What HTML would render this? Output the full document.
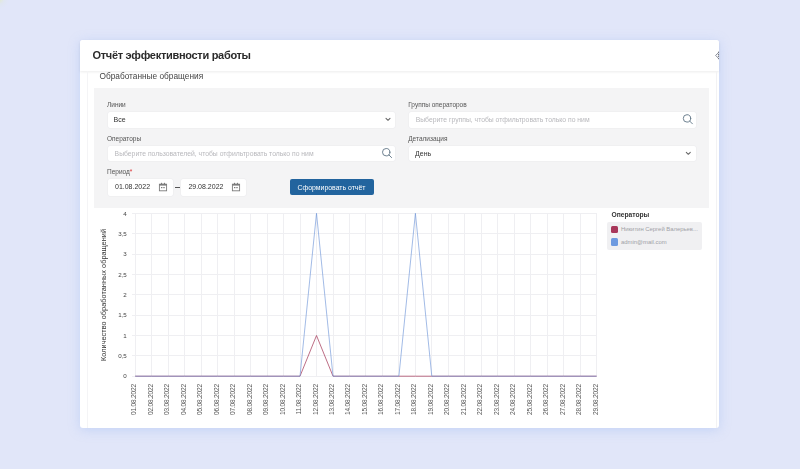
<!DOCTYPE html>
<html><head><meta charset="utf-8">
<style>
*{box-sizing:border-box;margin:0;padding:0}
html,body{width:800px;height:469px;overflow:hidden}
body{background:radial-gradient(circle at 0 0,#e2ead8 0,#e0e6f2 4px,rgba(224,230,248,0) 9px),#e1e6f9;font-family:"Liberation Sans",sans-serif;position:relative;color:#333}
.abs{position:absolute}
.card{left:80px;top:40px;width:639px;height:388px;background:#fff;border-radius:3px;overflow:hidden;box-shadow:0 2px 12px rgba(140,175,240,0.35)}
.header{left:80px;top:40px;width:639px;height:31px;background:#fff;border-radius:3px 3px 0 0;box-shadow:0 1px 3px rgba(0,0,0,0.08)}
.title{left:92.5px;top:49px;font-size:11px;letter-spacing:-0.3px;font-weight:700;color:#2a2a2a;white-space:nowrap}
.sub{left:99.5px;top:71px;font-size:8.3px;color:#444;white-space:nowrap}
.panel{left:94px;top:88px;width:615px;height:120px;background:#f4f4f5}
.lbl{font-size:6.5px;color:#555;white-space:nowrap}
.inp{background:#fff;border-radius:2px;height:16.5px;box-shadow:0 0 0 0.5px #ebebee}
.ph{font-size:6.8px;color:#b8b8bc;white-space:nowrap}
.val{font-size:7px;color:#333;white-space:nowrap}
.btn{left:289.5px;top:178.5px;width:84px;height:16.5px;background:#22649e;border-radius:2px;color:#fff;font-size:6.9px;text-align:center;line-height:17.3px;white-space:nowrap}
.chart{position:absolute;left:0;top:0}
.leg-title{left:611.5px;top:210.5px;font-size:6.7px;font-weight:700;color:#333;white-space:nowrap}
.legbox{left:607px;top:222px;width:95px;height:27.5px;background:#f0f0f2;border-radius:2px}
.sq{width:7.5px;height:7.5px;border-radius:1.5px}
.legt{font-size:5.9px;color:#a0a0a6;white-space:nowrap}
.wrap{position:absolute;left:0;top:0;width:800px;height:469px;filter:blur(0.3px)}
</style></head><body><div class="wrap">
<div class="abs card"></div>
<div class="abs header"></div>

<div class="abs" style="left:87px;top:71px;width:1px;height:357px;background:#f4f4f6"></div>
<div class="abs" style="left:716px;top:71px;width:1px;height:357px;background:#f2f2f4"></div>
<div class="abs title">Отчёт эффективности работы</div>
<div class="abs sub">Обработанные обращения</div>
<div class="abs panel"></div>

<div class="abs lbl" style="left:107px;top:101px">Линии</div>
<div class="abs inp" style="left:108px;top:111.5px;width:287px"></div>
<div class="abs val" style="left:113.6px;top:115.5px">Все</div>

<div class="abs lbl" style="left:107px;top:135px">Операторы</div>
<div class="abs inp" style="left:108px;top:145.8px;width:287px;height:15.5px"></div>
<div class="abs ph" style="left:114.6px;top:149.5px">Выберите пользователей, чтобы отфильтровать только по ним</div>

<div class="abs lbl" style="left:408.2px;top:101px">Группы операторов</div>
<div class="abs inp" style="left:409px;top:111.5px;width:287px"></div>
<div class="abs ph" style="left:415.7px;top:115.5px">Выберите группы, чтобы отфильтровать только по ним</div>

<div class="abs lbl" style="left:408.2px;top:135px">Детализация</div>
<div class="abs inp" style="left:409px;top:145.8px;width:287px;height:15.5px"></div>
<div class="abs val" style="left:415px;top:149.5px">День</div>

<div class="abs lbl" style="left:107px;top:168px">Период<span style="color:#d33">*</span></div>
<div class="abs inp" style="left:108px;top:179px;width:65px"></div>
<div class="abs val" style="left:115px;top:183px">01.08.2022</div>
<div class="abs" style="left:174.5px;top:186.8px;width:5.5px;height:1px;background:#555"></div>
<div class="abs inp" style="left:181px;top:179px;width:65px"></div>
<div class="abs val" style="left:188.4px;top:183px">29.08.2022</div>

<div class="abs btn">Сформировать отчёт</div>

<svg class="chart" width="800" height="469" viewBox="0 0 800 469">
<g stroke="#efeff2" stroke-width="1" shape-rendering="crispEdges"><line x1="135.2" y1="213.3" x2="135.2" y2="376.2"/><line x1="151.7" y1="213.3" x2="151.7" y2="376.2"/><line x1="168.2" y1="213.3" x2="168.2" y2="376.2"/><line x1="184.6" y1="213.3" x2="184.6" y2="376.2"/><line x1="201.1" y1="213.3" x2="201.1" y2="376.2"/><line x1="217.6" y1="213.3" x2="217.6" y2="376.2"/><line x1="234.1" y1="213.3" x2="234.1" y2="376.2"/><line x1="250.6" y1="213.3" x2="250.6" y2="376.2"/><line x1="267.0" y1="213.3" x2="267.0" y2="376.2"/><line x1="283.5" y1="213.3" x2="283.5" y2="376.2"/><line x1="300.0" y1="213.3" x2="300.0" y2="376.2"/><line x1="316.5" y1="213.3" x2="316.5" y2="376.2"/><line x1="333.0" y1="213.3" x2="333.0" y2="376.2"/><line x1="349.4" y1="213.3" x2="349.4" y2="376.2"/><line x1="365.9" y1="213.3" x2="365.9" y2="376.2"/><line x1="382.4" y1="213.3" x2="382.4" y2="376.2"/><line x1="398.9" y1="213.3" x2="398.9" y2="376.2"/><line x1="415.4" y1="213.3" x2="415.4" y2="376.2"/><line x1="431.8" y1="213.3" x2="431.8" y2="376.2"/><line x1="448.3" y1="213.3" x2="448.3" y2="376.2"/><line x1="464.8" y1="213.3" x2="464.8" y2="376.2"/><line x1="481.3" y1="213.3" x2="481.3" y2="376.2"/><line x1="497.8" y1="213.3" x2="497.8" y2="376.2"/><line x1="514.2" y1="213.3" x2="514.2" y2="376.2"/><line x1="530.7" y1="213.3" x2="530.7" y2="376.2"/><line x1="547.2" y1="213.3" x2="547.2" y2="376.2"/><line x1="563.7" y1="213.3" x2="563.7" y2="376.2"/><line x1="580.2" y1="213.3" x2="580.2" y2="376.2"/><line x1="596.6" y1="213.3" x2="596.6" y2="376.2"/><line x1="132.2" y1="376.2" x2="596.6" y2="376.2"/><line x1="132.2" y1="355.8" x2="596.6" y2="355.8"/><line x1="132.2" y1="335.5" x2="596.6" y2="335.5"/><line x1="132.2" y1="315.1" x2="596.6" y2="315.1"/><line x1="132.2" y1="294.8" x2="596.6" y2="294.8"/><line x1="132.2" y1="274.4" x2="596.6" y2="274.4"/><line x1="132.2" y1="254.0" x2="596.6" y2="254.0"/><line x1="132.2" y1="233.7" x2="596.6" y2="233.7"/><line x1="132.2" y1="213.3" x2="596.6" y2="213.3"/></g>
<polyline points="135.2,376.2 151.7,376.2 168.2,376.2 184.6,376.2 201.1,376.2 217.6,376.2 234.1,376.2 250.6,376.2 267.0,376.2 283.5,376.2 300.0,376.2 316.5,335.5 333.0,376.2 349.4,376.2 365.9,376.2 382.4,376.2 398.9,376.2 415.4,376.2 431.8,376.2 448.3,376.2 464.8,376.2 481.3,376.2 497.8,376.2 514.2,376.2 530.7,376.2 547.2,376.2 563.7,376.2 580.2,376.2 596.6,376.2" fill="none" stroke="#a8405e" stroke-opacity="0.9" stroke-width="0.85"/>
<polyline points="135.2,376.2 151.7,376.2 168.2,376.2 184.6,376.2 201.1,376.2 217.6,376.2 234.1,376.2 250.6,376.2 267.0,376.2 283.5,376.2 300.0,376.2 316.5,213.3 333.0,376.2 349.4,376.2 365.9,376.2 382.4,376.2 398.9,376.2 415.4,213.3 431.8,376.2 448.3,376.2 464.8,376.2 481.3,376.2 497.8,376.2 514.2,376.2 530.7,376.2 547.2,376.2 563.7,376.2 580.2,376.2 596.6,376.2" fill="none" stroke="#6f96d8" stroke-opacity="0.72" stroke-width="0.9"/>
<g font-family="Liberation Sans" font-size="6.2" fill="#444"><text x="126.8" y="378.4" text-anchor="end">0</text><text x="126.8" y="358.0" text-anchor="end">0,5</text><text x="126.8" y="337.7" text-anchor="end">1</text><text x="126.8" y="317.3" text-anchor="end">1,5</text><text x="126.8" y="297.0" text-anchor="end">2</text><text x="126.8" y="276.6" text-anchor="end">2,5</text><text x="126.8" y="256.2" text-anchor="end">3</text><text x="126.8" y="235.9" text-anchor="end">3,5</text><text x="126.8" y="215.5" text-anchor="end">4</text></g>
<g font-family="Liberation Sans" font-size="6.6" letter-spacing="-0.2" fill="#555"><text transform="translate(136.2,384) rotate(-90)" text-anchor="end">01.08.2022</text><text transform="translate(152.7,384) rotate(-90)" text-anchor="end">02.08.2022</text><text transform="translate(169.2,384) rotate(-90)" text-anchor="end">03.08.2022</text><text transform="translate(185.6,384) rotate(-90)" text-anchor="end">04.08.2022</text><text transform="translate(202.1,384) rotate(-90)" text-anchor="end">05.08.2022</text><text transform="translate(218.6,384) rotate(-90)" text-anchor="end">06.08.2022</text><text transform="translate(235.1,384) rotate(-90)" text-anchor="end">07.08.2022</text><text transform="translate(251.6,384) rotate(-90)" text-anchor="end">08.08.2022</text><text transform="translate(268.0,384) rotate(-90)" text-anchor="end">09.08.2022</text><text transform="translate(284.5,384) rotate(-90)" text-anchor="end">10.08.2022</text><text transform="translate(301.0,384) rotate(-90)" text-anchor="end">11.08.2022</text><text transform="translate(317.5,384) rotate(-90)" text-anchor="end">12.08.2022</text><text transform="translate(334.0,384) rotate(-90)" text-anchor="end">13.08.2022</text><text transform="translate(350.4,384) rotate(-90)" text-anchor="end">14.08.2022</text><text transform="translate(366.9,384) rotate(-90)" text-anchor="end">15.08.2022</text><text transform="translate(383.4,384) rotate(-90)" text-anchor="end">16.08.2022</text><text transform="translate(399.9,384) rotate(-90)" text-anchor="end">17.08.2022</text><text transform="translate(416.4,384) rotate(-90)" text-anchor="end">18.08.2022</text><text transform="translate(432.8,384) rotate(-90)" text-anchor="end">19.08.2022</text><text transform="translate(449.3,384) rotate(-90)" text-anchor="end">20.08.2022</text><text transform="translate(465.8,384) rotate(-90)" text-anchor="end">21.08.2022</text><text transform="translate(482.3,384) rotate(-90)" text-anchor="end">22.08.2022</text><text transform="translate(498.8,384) rotate(-90)" text-anchor="end">23.08.2022</text><text transform="translate(515.2,384) rotate(-90)" text-anchor="end">24.08.2022</text><text transform="translate(531.7,384) rotate(-90)" text-anchor="end">25.08.2022</text><text transform="translate(548.2,384) rotate(-90)" text-anchor="end">26.08.2022</text><text transform="translate(564.7,384) rotate(-90)" text-anchor="end">27.08.2022</text><text transform="translate(581.2,384) rotate(-90)" text-anchor="end">28.08.2022</text><text transform="translate(597.6,384) rotate(-90)" text-anchor="end">29.08.2022</text></g>
<text transform="translate(106.3,295) rotate(-90)" text-anchor="middle" font-family="Liberation Sans" font-size="7.4" fill="#333">Количество обработанных обращений</text>
</svg>

<div class="abs leg-title">Операторы</div>
<div class="abs legbox"></div>
<div class="abs sq" style="left:610.5px;top:225.5px;background:#a8375a"></div>
<div class="abs legt" style="left:621px;top:226px">Никитин Сергей Валерьев...</div>
<div class="abs sq" style="left:610.5px;top:238px;background:#6d9ae0"></div>
<div class="abs legt" style="left:621px;top:238.8px">admin@mail.com</div>
<svg class="abs" style="left:0;top:0" width="800" height="469" viewBox="0 0 800 469">
 <g fill="none" stroke="#666" stroke-width="1.05" stroke-linecap="round" stroke-linejoin="round">
  <path d="M386 118.3 L388 120.3 L390 118.3"/>
  <path d="M686.3 152.3 L688.3 154.3 L690.3 152.3"/>
 </g>
 <g fill="none" stroke="#667a8a" stroke-width="0.95" stroke-linecap="round">
  <circle cx="687" cy="118.4" r="3.7"/><path d="M689.7 121.1 L692.4 123.8"/>
  <circle cx="386.2" cy="152.2" r="3.7"/><path d="M388.9 154.9 L391.6 157.6"/>
 </g>
 <g fill="none" stroke="#7c7c7c" stroke-width="0.9">
  <rect x="159.4" y="184.2" width="7.2" height="6.6"/>
  <rect x="232.4" y="184.2" width="7.2" height="6.6"/>
 </g>
 <g fill="#7c7c7c">
  <rect x="159.4" y="184" width="7.2" height="1.6"/><rect x="160.9" y="182.8" width="1.3" height="1.5" rx="0.5"/><rect x="163.8" y="182.8" width="1.3" height="1.5" rx="0.5"/>
  <rect x="161" y="187" width="1.4" height="1.2"/><rect x="163.3" y="187" width="1.4" height="1.2"/>
  <rect x="232.4" y="184" width="7.2" height="1.6"/><rect x="233.9" y="182.8" width="1.3" height="1.5" rx="0.5"/><rect x="236.8" y="182.8" width="1.3" height="1.5" rx="0.5"/>
  <rect x="234" y="187" width="1.4" height="1.2"/><rect x="236.3" y="187" width="1.4" height="1.2"/>
 </g>
</svg>
<svg class="abs" style="left:710px;top:48px" width="9" height="14" viewBox="0 0 9 14">
 <g fill="none" stroke="#7a7f8c" stroke-width="0.9" stroke-linecap="round">
  <path d="M8.6 4.6 L5.6 7.4 L8.6 10.4"/>
 </g>
 <g fill="#6f7480"><circle cx="8.6" cy="4.3" r="0.7"/><circle cx="8.6" cy="6.5" r="0.7"/><circle cx="8.6" cy="8.3" r="0.7"/><circle cx="8.6" cy="10.6" r="0.7"/></g>
</svg>

</div></body></html>
